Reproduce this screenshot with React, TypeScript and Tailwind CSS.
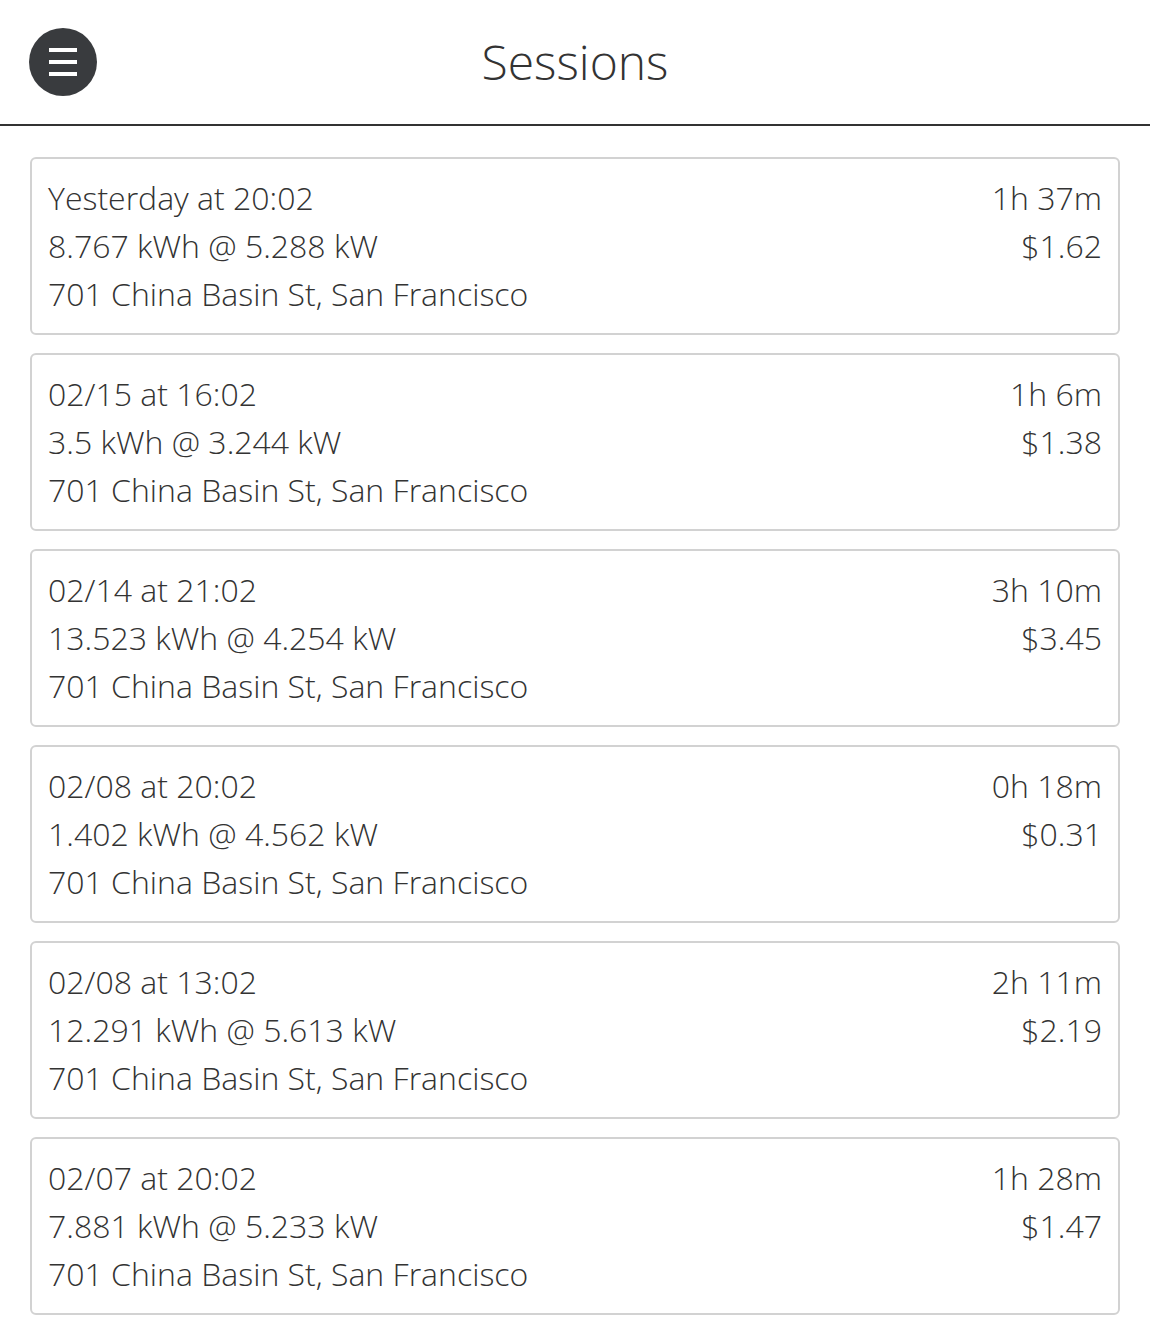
import React from 'react';

const SESSIONS = [
  { start: 'Yesterday at 20:02', energy: '8.767 kWh @ 5.288 kW', duration: '1h 37m', cost: '$1.62' },
  { start: '02/15 at 16:02', energy: '3.5 kWh @ 3.244 kW', duration: '1h 6m', cost: '$1.38' },
  { start: '02/14 at 21:02', energy: '13.523 kWh @ 4.254 kW', duration: '3h 10m', cost: '$3.45' },
  { start: '02/08 at 20:02', energy: '1.402 kWh @ 4.562 kW', duration: '0h 18m', cost: '$0.31' },
  { start: '02/08 at 13:02', energy: '12.291 kWh @ 5.613 kW', duration: '2h 11m', cost: '$2.19' },
  { start: '02/07 at 20:02', energy: '7.881 kWh @ 5.233 kW', duration: '1h 28m', cost: '$1.47' },
];

const ADDRESS = '701 China Basin St, San Francisco';

const MenuButton = () => (
  <button className="flex h-[68px] w-[68px] flex-col items-center justify-center gap-[8px] rounded-full bg-[#393b3e]">
    <span className="h-[4px] w-[28px] bg-white" />
    <span className="h-[4px] w-[28px] bg-white" />
    <span className="h-[4px] w-[28px] bg-white" />
  </button>
);

const App = () => {
  return (
    <div className="min-h-[1331px] bg-white font-['Open_Sans',sans-serif] text-[#333333]">
      <header className="relative flex h-[126px] items-center justify-center border-b-2 border-[#333333]">
        <div className="absolute left-[29px] top-[28px]">
          <MenuButton />
        </div>
        <h1 className="text-[48px] font-light leading-none">Sessions</h1>
      </header>
      <div className="flex flex-col gap-[18px] px-[30px] pt-[31px] pb-[16px]">
        {SESSIONS.map((session, index) => (
          <div
            key={index}
            className="flex justify-between rounded-[6px] border-2 border-[#d2d2d2] px-[16px] py-[15px] text-[32px] font-light leading-[48px]"
          >
            <div className="flex flex-col">
              <span>{session.start}</span>
              <span>{session.energy}</span>
              <span>{ADDRESS}</span>
            </div>
            <div className="flex flex-col items-end">
              <span>{session.duration}</span>
              <span>{session.cost}</span>
            </div>
          </div>
        ))}
      </div>
    </div>
  );
};

export default App;
